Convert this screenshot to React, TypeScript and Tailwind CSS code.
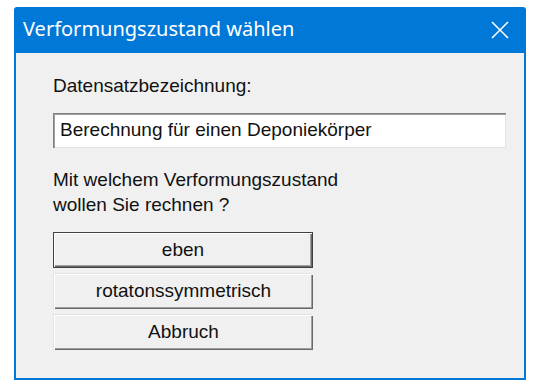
import React from "react";

export default function App() {
  return (
    <div className="w-[546px] h-[388px] bg-white pl-[14px] pt-[7px]">
      <div className="w-[512px] h-[373px] bg-[#0078d7] flex flex-col rounded-t-[3px] px-[2px] pb-[2px]">
        <div className="h-[46px] flex items-center justify-between pl-[7px] pr-[15px] text-white">
          <span className="text-[20px] leading-none font-['Noto_Sans',sans-serif] pb-[2px]">
            Verformungszustand wählen
          </span>
          <svg width="18" height="18" viewBox="0 0 18 18" className="mb-[1px]">
            <path d="M1 1 L17 17 M17 1 L1 17" stroke="white" strokeWidth="1.6" fill="none" />
          </svg>
        </div>
        <div className="flex-1 bg-[#f0f0f0] pl-[37px] pr-[18px] pt-[21px] text-[19px] text-[#111] font-['Liberation_Sans',Arial,sans-serif]">
          <div className="leading-[24px]">Datensatzbezeichnung:</div>
          <div className="mt-[15px] w-[453px] h-[35px] bg-white flex items-center pl-[7px] shadow-[inset_1px_1px_0_#808080,inset_2px_2px_0_#a0a0a0,inset_-1px_-1px_0_#e3e3e3]">
            Berechnung für einen Deponiekörper
          </div>
          <div className="mt-[19px] leading-[25px]">
            <div>Mit welchem Verformungszustand</div>
            <div>wollen Sie rechnen ?</div>
          </div>
          <div className="mt-[15px] flex flex-col gap-[5px]">
            <button className="w-[260px] h-[36px] bg-[#f0f0f0] border border-[#404040] shadow-[inset_1px_1px_0_#ffffff,inset_-1px_-1px_0_#696969,inset_-2px_-2px_0_#a0a0a0] flex items-center justify-center">
              eben
            </button>
            <button className="w-[260px] h-[36px] bg-[#f0f0f0] shadow-[inset_1px_1px_0_#ffffff,inset_-1px_-1px_0_#696969,inset_-2px_-2px_0_#a0a0a0] border-t border-l border-[#e3e3e3] flex items-center justify-center">
              rotatonssymmetrisch
            </button>
            <button className="w-[260px] h-[36px] bg-[#f0f0f0] shadow-[inset_1px_1px_0_#ffffff,inset_-1px_-1px_0_#696969,inset_-2px_-2px_0_#a0a0a0] border-t border-l border-[#e3e3e3] flex items-center justify-center">
              Abbruch
            </button>
          </div>
        </div>
      </div>
    </div>
  );
}
